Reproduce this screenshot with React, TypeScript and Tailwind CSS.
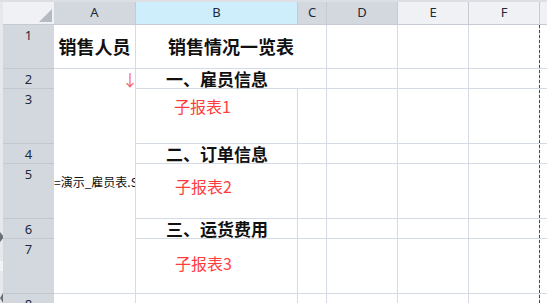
import React from "react";

const body = "border-r border-b border-[#d5dbe5]";
const hdr = "border-r border-b border-[#c6cbd3] flex items-center justify-center text-[13px] text-[#1e2a3a]";
const rh = "border-b border-[#c3c8d0] bg-[#d3d8df] flex justify-center text-[13px] text-[#1e2a3a] leading-[16px] pt-[2px]";
const cjk = { fontFamily: '"Noto Sans CJK SC", "Noto Sans", sans-serif' };

export default function App() {
  return (
    <div
      className="w-[547px] h-[303px] overflow-hidden relative bg-white border-t-2 border-[#dcdfe4] flex"
      style={{ fontFamily: '"Noto Sans", "Noto Sans CJK SC", sans-serif' }}
    >
      {/* left strip */}
      <div className="w-[3px] shrink-0 bg-[#e6e8ec] flex flex-col">
        <div className="h-[232px]" />
        <div className="w-0 h-0 border-t-[5px] border-t-transparent border-b-[5px] border-b-transparent border-l-[4px] border-l-[#6b6f76]" />
        <div className="h-[20px]" />
        <div className="h-[10px] bg-[#f3f4f6]" />
        <div className="h-[22px]" />
        <div className="w-0 h-0 border-t-[5px] border-t-transparent border-b-[5px] border-b-transparent border-r-[3px] border-r-[#6b6f76]" />
      </div>

      <div className="grid grid-cols-[51px_82px_162px_29px_71px_71px_71px_40px] grid-rows-[23px_44px_20px_55px_20px_55px_20px_55px_40px] shrink-0">
        {/* header row */}
        <div className="col-start-1 row-start-1 bg-[#f0f1f5] border-b border-[#c6cbd3] relative">
          <div className="absolute right-[2px] bottom-[2px] w-0 h-0 border-l-[13px] border-l-transparent border-b-[13px] border-b-[#b6bac2]" />
        </div>
        <div className={`col-start-2 row-start-1 bg-[#d3d8df] ${hdr}`}>A</div>
        <div className={`col-start-3 row-start-1 bg-[#cfeefb] ${hdr}`}>B</div>
        <div className={`col-start-4 row-start-1 bg-[#d3d8df] ${hdr}`}>C</div>
        <div className={`col-start-5 row-start-1 bg-[#d3d8df] ${hdr}`}>D</div>
        <div className={`col-start-6 row-start-1 bg-[#f0f1f5] ${hdr}`}>E</div>
        <div className={`col-start-7 row-start-1 bg-[#f0f1f5] ${hdr}`}>F</div>
        <div className={`col-start-8 row-start-1 bg-[#f0f1f5] ${hdr}`} />

        {/* row headers */}
        <div className={`col-start-1 row-start-2 ${rh}`}>1</div>
        <div className={`col-start-1 row-start-3 ${rh}`}>2</div>
        <div className={`col-start-1 row-start-4 ${rh}`}>3</div>
        <div className={`col-start-1 row-start-5 ${rh}`}>4</div>
        <div className={`col-start-1 row-start-6 ${rh}`}>5</div>
        <div className={`col-start-1 row-start-7 ${rh}`}>6</div>
        <div className={`col-start-1 row-start-8 ${rh}`}>7</div>
        <div className={`col-start-1 row-start-9 ${rh}`}>8</div>

        {/* sheet row 1 */}
        <div
          className={`col-start-2 row-start-2 ${body} flex items-center justify-center text-[18px] font-bold text-[#111]`}
          style={cjk}
        >
          销售人员
        </div>
        <div
          className={`col-start-3 col-span-2 row-start-2 ${body} flex items-center justify-center text-[18px] font-bold text-[#111]`}
          style={cjk}
        >
          销售情况一览表
        </div>
        <div className={`col-start-5 row-start-2 ${body}`} />
        <div className={`col-start-6 row-start-2 ${body}`} />
        <div className={`col-start-7 row-start-2 ${body}`} />
        <div className={`col-start-8 row-start-2 border-b border-[#d5dbe5]`} />

        {/* merged A2:A7 */}
        <div className={`col-start-2 row-start-3 row-span-6 ${body} relative overflow-hidden flex items-center`}>
          <span className="whitespace-nowrap text-[12px] text-[#111] leading-[14px] mt-[1px]" style={cjk}>
            =演示_雇员表.S
          </span>
          <span className="absolute right-[-3px] top-[1px] text-[16px] leading-[18px] text-[#f26464]" style={cjk}>
            ↓
          </span>
        </div>

        {/* sheet row 2 */}
        <div
          className={`col-start-3 col-span-2 row-start-3 ${body} flex items-center pl-[30px] text-[17px] font-bold text-[#111]`}
          style={cjk}
        >
          一、雇员信息
        </div>
        <div className={`col-start-5 row-start-3 ${body}`} />
        <div className={`col-start-6 row-start-3 ${body}`} />
        <div className={`col-start-7 row-start-3 ${body}`} />
        <div className={`col-start-8 row-start-3 border-b border-[#d5dbe5]`} />

        {/* sheet row 3 */}
        <div className={`col-start-3 row-start-4 ${body} pl-[38px] pt-[9px] text-[16px] leading-[16px] text-[#ff3d3d]`} style={cjk}>
          子报表1
        </div>
        <div className={`col-start-4 row-start-4 ${body}`} />
        <div className={`col-start-5 row-start-4 ${body}`} />
        <div className={`col-start-6 row-start-4 ${body}`} />
        <div className={`col-start-7 row-start-4 ${body}`} />
        <div className={`col-start-8 row-start-4 border-b border-[#d5dbe5]`} />

        {/* sheet row 4 */}
        <div
          className={`col-start-3 row-start-5 ${body} flex items-center pl-[30px] text-[17px] font-bold text-[#111]`}
          style={cjk}
        >
          二、订单信息
        </div>
        <div className={`col-start-4 row-start-5 ${body}`} />
        <div className={`col-start-5 row-start-5 ${body}`} />
        <div className={`col-start-6 row-start-5 ${body}`} />
        <div className={`col-start-7 row-start-5 ${body}`} />
        <div className={`col-start-8 row-start-5 border-b border-[#d5dbe5]`} />

        {/* sheet row 5 */}
        <div className={`col-start-3 row-start-6 ${body} pl-[39px] pt-[14px] text-[16px] leading-[16px] text-[#ff3d3d]`} style={cjk}>
          子报表2
        </div>
        <div className={`col-start-4 row-start-6 ${body}`} />
        <div className={`col-start-5 row-start-6 ${body}`} />
        <div className={`col-start-6 row-start-6 ${body}`} />
        <div className={`col-start-7 row-start-6 ${body}`} />
        <div className={`col-start-8 row-start-6 border-b border-[#d5dbe5]`} />

        {/* sheet row 6 */}
        <div
          className={`col-start-3 row-start-7 ${body} flex items-center pl-[30px] text-[17px] font-bold text-[#111]`}
          style={cjk}
        >
          三、运货费用
        </div>
        <div className={`col-start-4 row-start-7 ${body}`} />
        <div className={`col-start-5 row-start-7 ${body}`} />
        <div className={`col-start-6 row-start-7 ${body}`} />
        <div className={`col-start-7 row-start-7 ${body}`} />
        <div className={`col-start-8 row-start-7 border-b border-[#d5dbe5]`} />

        {/* sheet row 7 */}
        <div className={`col-start-3 row-start-8 ${body} pl-[39px] pt-[16px] text-[16px] leading-[16px] text-[#ff3d3d]`} style={cjk}>
          子报表3
        </div>
        <div className={`col-start-4 row-start-8 ${body}`} />
        <div className={`col-start-5 row-start-8 ${body}`} />
        <div className={`col-start-6 row-start-8 ${body}`} />
        <div className={`col-start-7 row-start-8 ${body}`} />
        <div className={`col-start-8 row-start-8 border-b border-[#d5dbe5]`} />

        {/* sheet row 8 */}
        <div className={`col-start-2 row-start-9 ${body}`} />
        <div className={`col-start-3 row-start-9 ${body}`} />
        <div className={`col-start-4 row-start-9 ${body}`} />
        <div className={`col-start-5 row-start-9 ${body}`} />
        <div className={`col-start-6 row-start-9 ${body}`} />
        <div className={`col-start-7 row-start-9 ${body}`} />
        <div className={`col-start-8 row-start-9 border-b border-[#d5dbe5]`} />
      </div>

      {/* page-break dashed line */}
      <div className="absolute left-[539px] top-[23px] bottom-0 w-0 border-l border-dashed border-[#4a4a4a]" />
    </div>
  );
}
